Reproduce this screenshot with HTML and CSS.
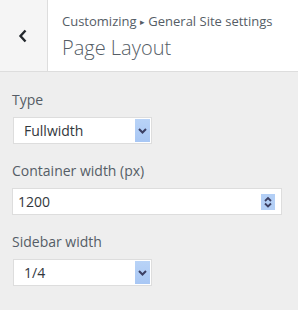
FILE: index.html
```html
<!DOCTYPE html>
<html lang="en">
<head>
  <meta charset="UTF-8" />
  <title>Page Layout</title>
  <link rel="stylesheet" href="styles.css">
</head>
<body>
  <header class="panel-header">
    <div class="back-btn">
      <svg width="10" height="14" viewBox="0 0 10 14">
        <path d="M7.5 1.5 L2.5 7 L7.5 12.5" fill="none" stroke="#23282d" stroke-width="2.4"/>
      </svg>
    </div>
    <div class="title-wrap">
      <div class="crumb">Customizing <span class="sep">&#9656;</span> General Site settings</div>
      <div class="title">Page Layout</div>
    </div>
  </header>

  <div class="panel">
    <div class="field">
      <label class="label">Type</label>
      <div class="select">
        <span class="value">Fullwidth</span>
        <span class="arrow">
          <svg width="9" height="6" viewBox="0 0 9 6"><path d="M1 1 L4.5 4.5 L8 1" fill="none" stroke="#3b3f63" stroke-width="2"/></svg>
        </span>
      </div>
    </div>

    <div class="field">
      <label class="label">Container width (px)</label>
      <div class="number">
        <span class="value">1200</span>
        <span class="spin">
          <svg width="8" height="12" viewBox="0 0 8 12">
            <path d="M1 5 L4 2 L7 5" fill="none" stroke="#3b3f63" stroke-width="1.8"/>
            <path d="M1 7.5 L4 10.5 L7 7.5" fill="none" stroke="#3b3f63" stroke-width="1.8"/>
          </svg>
        </span>
      </div>
    </div>

    <div class="field">
      <label class="label">Sidebar width</label>
      <div class="select">
        <span class="value">1/4</span>
        <span class="arrow">
          <svg width="9" height="6" viewBox="0 0 9 6"><path d="M1 1 L4.5 4.5 L8 1" fill="none" stroke="#3b3f63" stroke-width="2"/></svg>
        </span>
      </div>
    </div>
  </div>
</body>
</html>
```

FILE: styles.css
```css
* {
  box-sizing: border-box;
  margin: 0;
  padding: 0;
}

body {
  font-family: 'Open Sans', 'Liberation Sans', sans-serif;
  background: #eeeeee;
  color: #555d66;
}

/* Header with back button */
.panel-header {
  display: flex;
  height: 72px;
  background: #fff;
  border-bottom: 1px solid #dddddd;
}

.back-btn {
  width: 48px;
  background: #f5f5f5;
  border-right: 1px solid #dddddd;
  display: flex;
  align-items: center;
  justify-content: center;
  padding-right: 1px;
}

.title-wrap {
  padding: 12px 0 0 14px;
}

.crumb {
  font-size: 13px;
  line-height: 18px;
  color: #555d66;
}

.crumb .sep {
  font-size: 9px;
  vertical-align: 1px;
}

.title {
  margin-top: 4px;
  font-size: 20px;
  line-height: 26px;
  font-weight: 300;
  color: #555d66;
}

/* Controls */
.panel {
  padding: 18px 12px;
}

.field {
  margin-bottom: 17px;
}

.label {
  display: block;
  font-size: 14px;
  line-height: 20px;
  color: #555d66;
  margin-bottom: 7px;
}

.select,
.number {
  display: flex;
  align-items: center;
  height: 27px;
  background: #fff;
  border: 1px solid #dddddd;
  font-size: 14px;
  color: #32373c;
}

.select {
  width: 139px;
  margin-left: 1px;
  padding: 1px;
}

.select .value {
  flex: 1;
  padding-left: 9px;
}

.select .arrow {
  width: 15px;
  height: 100%;
  background: linear-gradient(#b9d3f7, #a8c7f4);
  display: flex;
  align-items: center;
  justify-content: center;
}

.number {
  width: 270px;
  padding: 0 6px 0 5px;
}

.number .value {
  flex: 1;
}

.spin {
  width: 14px;
  height: 16px;
  background: #b3cff6;
  display: flex;
  align-items: center;
  justify-content: center;
}
```
